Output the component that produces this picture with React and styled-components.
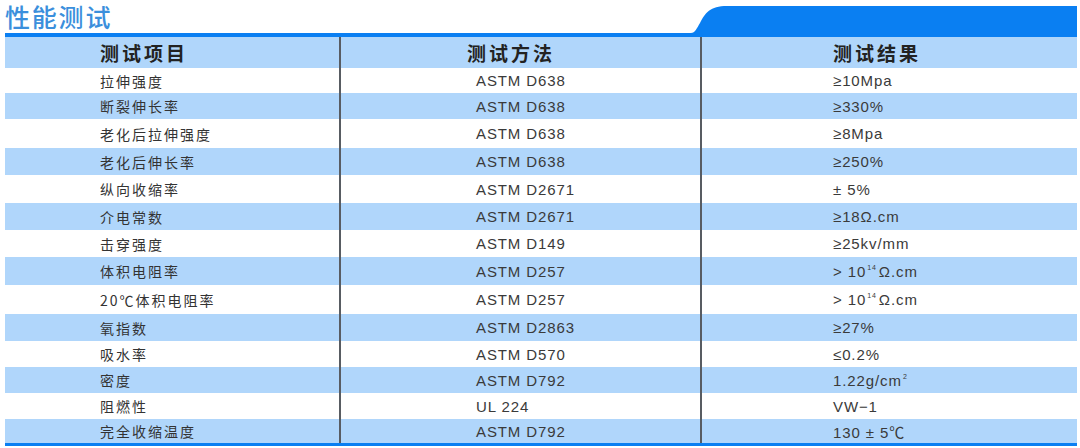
import styled, { createGlobalStyle } from "styled-components";

const GlobalStyle = createGlobalStyle`
    html, body {
        margin: 0;
        padding: 0;
        background: #ffffff;
    }
    body {
        font-family: "Liberation Sans", "Noto Sans CJK SC", sans-serif;
    }
`

const Page = styled.div`
    width: 1080px;
    height: 448px;
    padding: 0 3px 0 5px;
    box-sizing: border-box;
    display: flex;
    flex-direction: column;
`

const TopBar = styled.div`
    display: flex;
    align-items: flex-end;
    justify-content: space-between;
    height: 33px;
`

const Title = styled.h1`
    margin: 0 0 4px 0;
    font-family: "Noto Sans CJK SC", sans-serif;
    font-size: 25px;
    line-height: 26px;
    font-weight: 500;
    letter-spacing: 1.8px;
    color: #3b8fdc;
`

const Tab = styled.svg`
    display: block;
    width: 392px;
    height: 27px;
`

const Rule = styled.div`
    height: ${props => props.thick}px;
    background-color: #0a7ff2;
`

const Table = styled.div`
    display: flex;
    flex-direction: column;
`

const Row = styled.div`
    display: grid;
    grid-template-columns: 334px 361px 1fr;
    height: ${props => props.h}px;
    background-color: ${props => props.striped ? '#b0d6fb' : '#ffffff'};
`

const Cell = styled.div`
    display: flex;
    align-items: center;
    padding-left: ${props => props.pad}px;
    border-left: ${props => props.divided ? '2px solid #585c62' : 'none'};
    color: #3a3a3a;
    font-size: 15px;
    letter-spacing: 0.9px;
    white-space: nowrap;
`

const ZhText = styled.span`
    font-family: "Noto Sans CJK SC", sans-serif;
    font-size: 14px;
    letter-spacing: 2px;
    color: #333;
`

const HeadText = styled.span`
    font-family: "Noto Sans CJK SC", sans-serif;
    font-size: 19px;
    font-weight: 700;
    letter-spacing: 3px;
    color: #222;
`

const Sup = styled.sup`
    font-size: 7px;
    vertical-align: 7px;
    line-height: 0;
    margin: 0 2px 0 1px;
`

const rows = [
    ['拉伸强度', 'ASTM D638', '≥10Mpa'],
    ['断裂伸长率', 'ASTM D638', '≥330%'],
    ['老化后拉伸强度', 'ASTM D638', '≥8Mpa'],
    ['老化后伸长率', 'ASTM D638', '≥250%'],
    ['纵向收缩率', 'ASTM D2671', '± 5%'],
    ['介电常数', 'ASTM D2671', '≥18Ω.cm'],
    ['击穿强度', 'ASTM D149', '≥25kv/mm'],
    ['体积电阻率', 'ASTM D257', 'ohm'],
    ['20℃体积电阻率', 'ASTM D257', 'ohm'],
    ['氧指数', 'ASTM D2863', '≥27%'],
    ['吸水率', 'ASTM D570', '≤0.2%'],
    ['密度', 'ASTM D792', 'density'],
    ['阻燃性', 'UL 224', 'VW−1'],
    ['完全收缩温度', 'ASTM D792', '130 ± 5℃'],
]

// row heights measured off the reference
const heights = [25, 26, 29, 27, 28, 27, 27, 28, 29, 27, 26, 26, 26, 24]

function Result({ value }) {
    if (value === 'ohm') {
        return <span>&gt; 10<Sup>14</Sup>Ω.cm</span>
    }
    if (value === 'density') {
        return <span>1.22g/cm<Sup>2</Sup></span>
    }
    return <span>{value}</span>
}

export default function App() {
    return (
        <>
            <GlobalStyle />
            <Page>
                <TopBar>
                    <Title>性能测试</Title>
                    <Tab viewBox="0 0 392 27" preserveAspectRatio="none">
                        <path d="M0 27 L6 27 C10 27 12 22 15 17 C20 7 25 0 42 0 L392 0 L392 27 Z" fill="#0a7ff2" />
                    </Tab>
                </TopBar>
                <Rule thick={4} />
                <Table>
                    <Row h={31} striped>
                        <Cell pad={95}><HeadText>测试项目</HeadText></Cell>
                        <Cell pad={126} divided><HeadText>测试方法</HeadText></Cell>
                        <Cell pad={131} divided><HeadText>测试结果</HeadText></Cell>
                    </Row>
                    {rows.map((r, i) => (
                        <Row key={i} h={heights[i]} striped={i % 2 === 1}>
                            <Cell pad={95}><ZhText>{r[0]}</ZhText></Cell>
                            <Cell pad={135} divided>{r[1]}</Cell>
                            <Cell pad={131} divided><Result value={r[2]} /></Cell>
                        </Row>
                    ))}
                </Table>
                <Rule thick={3} />
            </Page>
        </>
    )
}
